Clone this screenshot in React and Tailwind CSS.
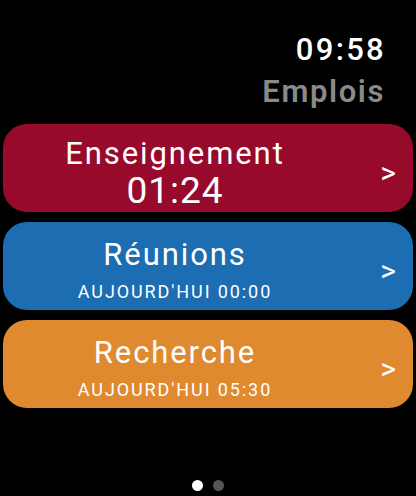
import React from 'react';

const ROWS = [
  { title: 'Enseignement', sub: '01:24', big: true, bg: 'bg-[#970a2c]' },
  { title: 'Réunions', sub: "AUJOURD'HUI 00:00", bg: 'bg-[#1c6db1]' },
  { title: 'Recherche', sub: "AUJOURD'HUI 05:30", bg: 'bg-[#df8a2e]' },
];

const Row = ({ title, sub, big, bg }) => (
  <div className={`${bg} h-[88px] rounded-[24px] flex items-center text-white`}>
    <div className="flex-1 flex flex-col items-center pr-[19px] pt-[10px]">
      <span className="text-[31px] leading-[36px] tracking-[1.9px]">{title}</span>
      {big ? (
        <span className="text-[37px] leading-[38px] tracking-[1px]">{sub}</span>
      ) : (
        <span className="text-[18px] leading-[26px] tracking-[1.9px] mt-[6px]">{sub}</span>
      )}
    </div>
    <span className="text-[30px] leading-none w-[30px] mr-[17px] mt-[10px] text-right">&gt;</span>
  </div>
);

export default function App() {
  return (
    <div className="w-[416px] h-[496px] bg-black flex flex-col" style={{ fontFamily: 'Roboto, "Noto Sans", sans-serif' }}>
      <div className="flex flex-col items-end pr-[32px] pt-[31px]">
        <span className="text-white text-[31px] leading-[38px] font-medium tracking-[2.3px] mr-[-2px]">09:58</span>
        <span className="text-[#8a8a8a] text-[31px] leading-[40px] font-semibold tracking-[1.6px] mt-[3px] mr-[-1px]">Emplois</span>
      </div>
      <div className="flex flex-col gap-[10px] px-[3px] mt-[12px]">
        {ROWS.map((r) => (
          <Row key={r.title} {...r} />
        ))}
      </div>
      <div className="flex justify-center gap-[10px] mt-auto mb-[5px]">
        <span className="w-[11px] h-[11px] rounded-full bg-white" />
        <span className="w-[11px] h-[11px] rounded-full bg-[#555555]" />
      </div>
    </div>
  );
}
